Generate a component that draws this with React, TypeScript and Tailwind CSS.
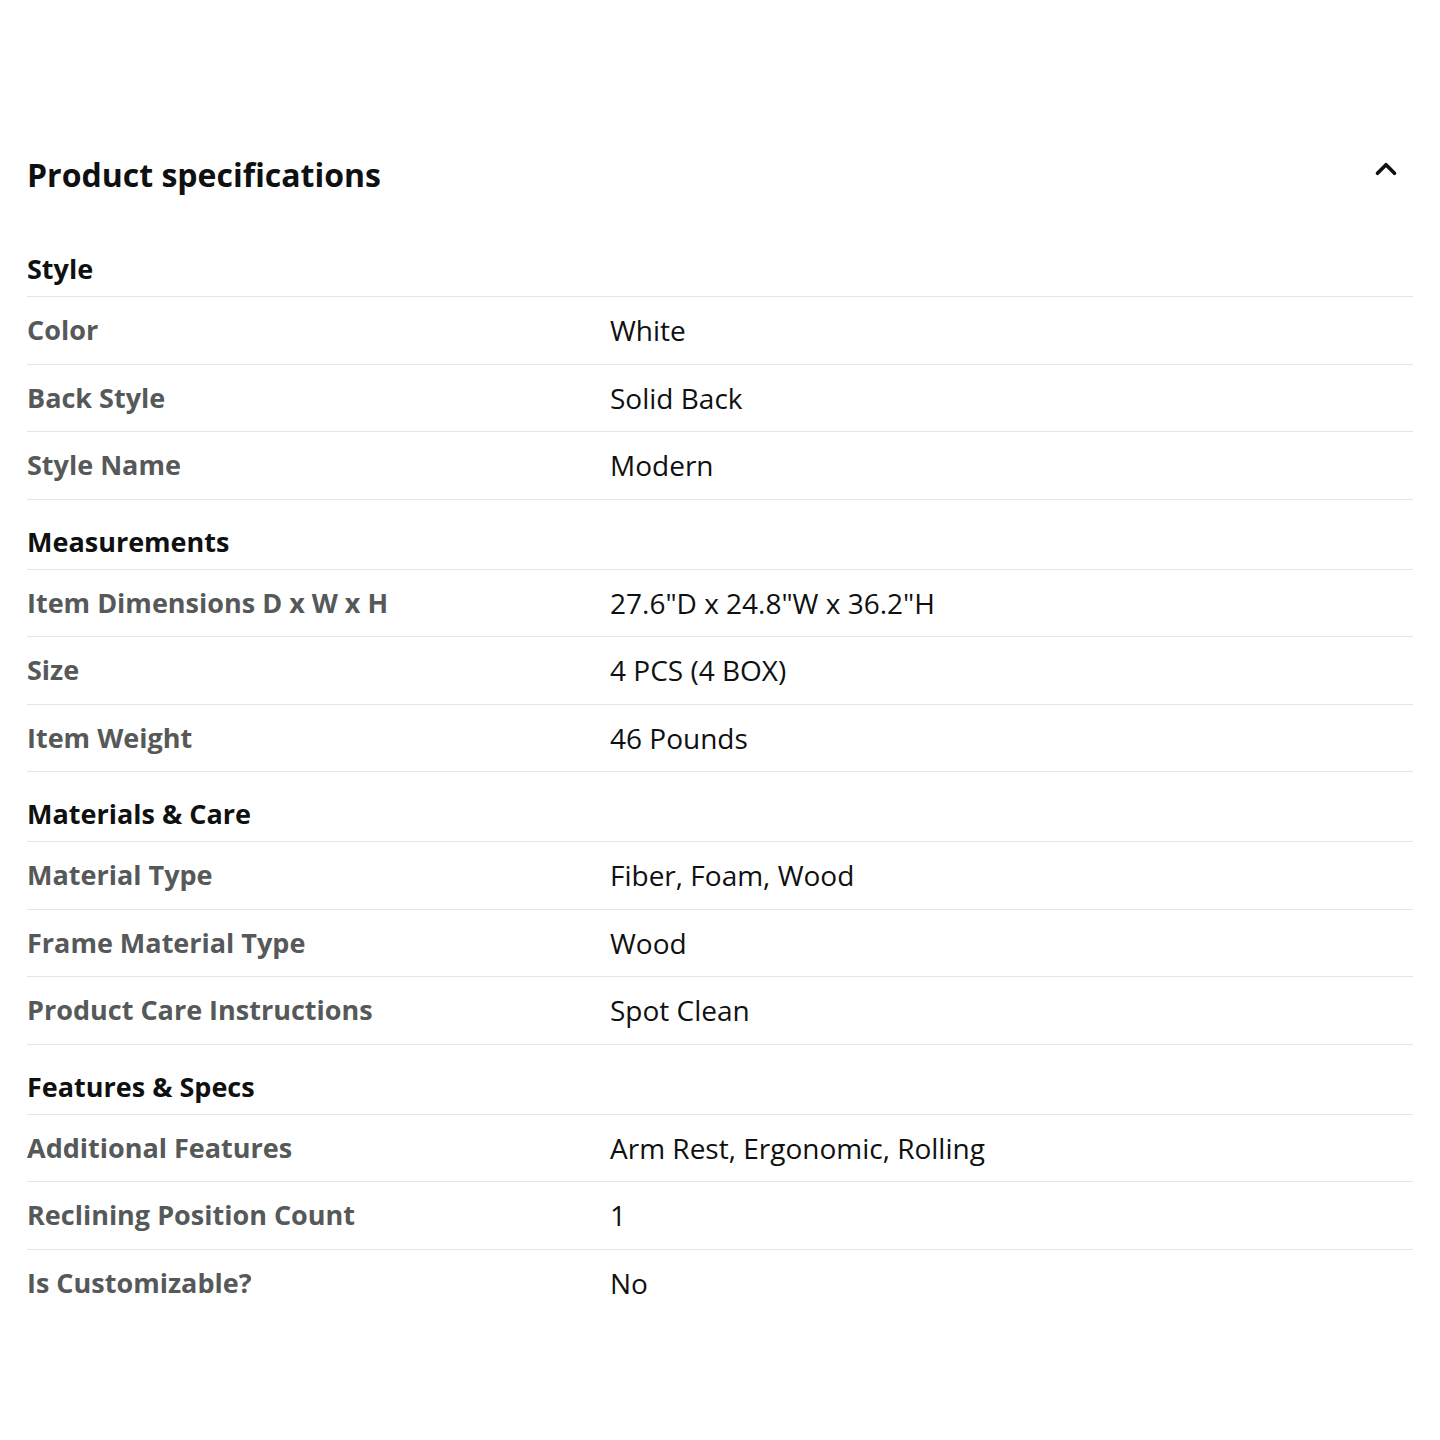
import { ChevronUp } from 'lucide-react'

type Spec = { label: string; value: string }
type Section = { title: string; specs: Spec[] }

const sections: Section[] = [
  {
    title: 'Style',
    specs: [
      { label: 'Color', value: 'White' },
      { label: 'Back Style', value: 'Solid Back' },
      { label: 'Style Name', value: 'Modern' },
    ],
  },
  {
    title: 'Measurements',
    specs: [
      { label: 'Item Dimensions D x W x H', value: '27.6"D x 24.8"W x 36.2"H' },
      { label: 'Size', value: '4 PCS (4 BOX)' },
      { label: 'Item Weight', value: '46 Pounds' },
    ],
  },
  {
    title: 'Materials & Care',
    specs: [
      { label: 'Material Type', value: 'Fiber, Foam, Wood' },
      { label: 'Frame Material Type', value: 'Wood' },
      { label: 'Product Care Instructions', value: 'Spot Clean' },
    ],
  },
  {
    title: 'Features & Specs',
    specs: [
      { label: 'Additional Features', value: 'Arm Rest, Ergonomic, Rolling' },
      { label: 'Reclining Position Count', value: '1' },
      { label: 'Is Customizable?', value: 'No' },
    ],
  },
]

export default function App() {
  const last = sections.length - 1
  return (
    <div className="min-h-[1440px] bg-white px-[27px] pt-[140px] text-[#0f1111]" style={{ fontFamily: '"Open Sans", "Liberation Sans", sans-serif' }}>
      <div className="flex h-[70px] items-center justify-between mb-[17px]">
        <h1 className="text-[32px] font-bold leading-none">Product specifications</h1>
        <ChevronUp className="mr-[10px] mb-[12px] h-[34px] w-[34px] text-[#0f1111]" strokeWidth={2.6} />
      </div>
      {sections.map((sec, si) => (
        <div key={sec.title}>
          <div className="flex h-[70px] items-end border-b border-[#e3e6e6] pb-[12px]">
            <h2 className="text-[27px] font-bold leading-[30px]">{sec.title}</h2>
          </div>
          {sec.specs.map((s, i) => {
            const isLast = si === last && i === sec.specs.length - 1
            return (
              <div
                key={s.label}
                className={`flex h-[67.5px] items-center ${isLast ? '' : 'border-b border-[#e3e6e6]'}`}
              >
                <div className="w-[583px] shrink-0 text-[27px] font-bold text-[#565959]">{s.label}</div>
                <div className="text-[28px] text-[#0f1111]">{s.value}</div>
              </div>
            )
          })}
        </div>
      ))}
    </div>
  )
}
